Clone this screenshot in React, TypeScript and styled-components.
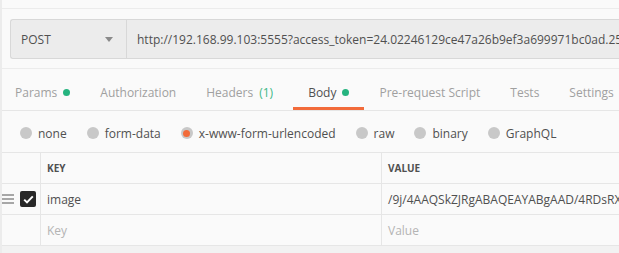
import React from "react";
import styled, { createGlobalStyle } from "styled-components";

const Global = createGlobalStyle`
  html, body { margin: 0; padding: 0; background: #fafafa; }
  body { font-family: "Open Sans", "Liberation Sans", sans-serif; overflow: hidden; }
`;

const Page = styled.div`
  width: 619px;
  height: 253px;
  display: flex;
  flex-direction: column;
  background: #fafafa;
  border-left: 2px solid #ececec;
  box-sizing: border-box;
  overflow: hidden;
`;

const TopStrip = styled.div`
  height: 8px;
  border-bottom: 1px solid #ececec;
  flex: none;
`;

const RequestSection = styled.div`
  padding: 10px 0 9px 8px;
  border-bottom: 1px solid #ececec;
  flex: none;
`;

const UrlBox = styled.div`
  display: flex;
  height: 38px;
  border: 1px solid #d8d8d8;
  border-right: none;
  border-radius: 3px 0 0 3px;
  background: #ececec;
  overflow: hidden;
`;

const Method = styled.div`
  width: 116px;
  flex: none;
  display: flex;
  align-items: center;
  justify-content: space-between;
  padding: 0 13px 0 10px;
  box-sizing: border-box;
  border-right: 1px solid #d8d8d8;
  font-size: 12px;
  color: #505050;
`;

const Caret = styled.span`
  width: 0;
  height: 0;
  border-left: 4px solid transparent;
  border-right: 4px solid transparent;
  border-top: 5px solid #8a8a8a;
`;

const Url = styled.div`
  padding-left: 10px;
  display: flex;
  align-items: center;
  font-size: 12px;
  color: #505050;
  white-space: nowrap;
`;

const Tabs = styled.div`
  display: flex;
  height: 41px;
  border-bottom: 1px solid #e6e6e6;
  flex: none;
  margin-left: -2px;
`;

const Tab = styled.div<{ $active?: boolean }>`
  position: relative;
  padding: 6px 15px 0;
  display: flex;
  align-items: center;
  font-size: 12px;
  color: ${(p) => (p.$active ? "#505050" : "#a0a0a0")};
  white-space: nowrap;
  &::after {
    content: "";
    position: absolute;
    left: 0;
    right: 0;
    bottom: 0;
    height: 3px;
    background: ${(p) => (p.$active ? "#f26b3a" : "transparent")};
  }
`;

const Dot = styled.span`
  width: 7px;
  height: 7px;
  border-radius: 50%;
  background: #26b47f;
  margin-left: 6px;
`;

const Count = styled.span`
  color: #3eb886;
  margin-left: 6px;
  margin-right: 5px;
`;

const RadioRow = styled.div`
  display: flex;
  align-items: center;
  height: 41px;
  padding: 3px 0 0 18px;
  box-sizing: border-box;
  flex: none;
`;

const RadioItem = styled.label`
  display: flex;
  align-items: center;
  margin-right: 20px;
  font-size: 12px;
  color: #505050;
`;

const Radio = styled.span<{ $checked?: boolean }>`
  width: 12px;
  height: 12px;
  border-radius: 50%;
  background: #c8c8c8;
  margin-right: 6px;
  display: flex;
  align-items: center;
  justify-content: center;
  &::after {
    content: "";
    width: 7px;
    height: 7px;
    border-radius: 50%;
    background: ${(p) => (p.$checked ? "#f26b3a" : "transparent")};
  }
`;

const Table = styled.div`
  display: grid;
  grid-template-columns: 41px 341px 1fr;
  border-top: 1px solid #e6e6e6;
  margin-left: -2px;
  flex: none;
`;

const Cell = styled.div<{ $head?: boolean; $placeholder?: boolean; $first?: boolean }>`
  height: 30px;
  border-bottom: 1px solid #e6e6e6;
  border-right: ${(p) => (p.$first ? "1px solid #e6e6e6" : "none")};
  display: flex;
  align-items: center;
  padding-left: ${(p) => (p.$first ? "0" : "6px")};
  font-size: ${(p) => (p.$head ? "10px" : "12px")};
  font-weight: ${(p) => (p.$head ? 700 : 400)};
  color: ${(p) => (p.$placeholder ? "#b4b4b4" : "#505050")};
  white-space: nowrap;
  overflow: hidden;
`;

const KeyCell = styled(Cell)`
  border-right: 1px solid #e6e6e6;
`;

const Handle = styled.div`
  display: flex;
  align-items: center;
  gap: 6px;
  padding-left: 2px;
`;

const Check = styled.span`
  width: 16px;
  height: 16px;
  border-radius: 2px;
  background: #282828;
  display: flex;
  align-items: center;
  justify-content: center;
`;

const Rest = styled.div`
  flex: 1;
  background: #f2f2f2;
  margin-left: -2px;
`;

const radios = [
  { label: "none" },
  { label: "form-data" },
  { label: "x-www-form-urlencoded", checked: true },
  { label: "raw" },
  { label: "binary" },
  { label: "GraphQL" },
];

export default function App() {
  return (
    <>
      <Global />
      <Page>
        <TopStrip />
        <RequestSection>
          <UrlBox>
            <Method>
              POST
              <Caret />
            </Method>
            <Url>http://192.168.99.103:5555?access_token=24.02246129ce47a26b9ef3a699971bc0ad.2592000.1589</Url>
          </UrlBox>
        </RequestSection>
        <Tabs>
          <Tab>Params<Dot /></Tab>
          <Tab>Authorization</Tab>
          <Tab>Headers<Count>(1)</Count></Tab>
          <Tab $active>Body<Dot /></Tab>
          <Tab>Pre-request Script</Tab>
          <Tab>Tests</Tab>
          <Tab>Settings</Tab>
        </Tabs>
        <RadioRow>
          {radios.map((r) => (
            <RadioItem key={r.label}>
              <Radio $checked={r.checked} />
              {r.label}
            </RadioItem>
          ))}
        </RadioRow>
        <Table>
          <Cell $first />
          <KeyCell $head>KEY</KeyCell>
          <Cell $head>VALUE</Cell>

          <Cell $first>
            <Handle>
              <svg width="12" height="10" viewBox="0 0 12 10">
                <path d="M0 1h12M0 5h12M0 9h12" stroke="#8c8c8c" strokeWidth="1.4" />
              </svg>
              <Check>
                <svg width="11" height="9" viewBox="0 0 11 9">
                  <path d="M1.2 4.6l2.8 2.8L9.8 1.4" stroke="#fff" strokeWidth="2" fill="none" />
                </svg>
              </Check>
            </Handle>
          </Cell>
          <KeyCell>image</KeyCell>
          <Cell>/9j/4AAQSkZJRgABAQEAYABgAAD/4RDsRXhpZgAATU0AKgAAAAgABAE7AAIAAAAGAAAISodpAAQAAAAB</Cell>

          <Cell $first />
          <KeyCell $placeholder>Key</KeyCell>
          <Cell $placeholder>Value</Cell>
        </Table>
        <Rest />
      </Page>
    </>
  );
}
